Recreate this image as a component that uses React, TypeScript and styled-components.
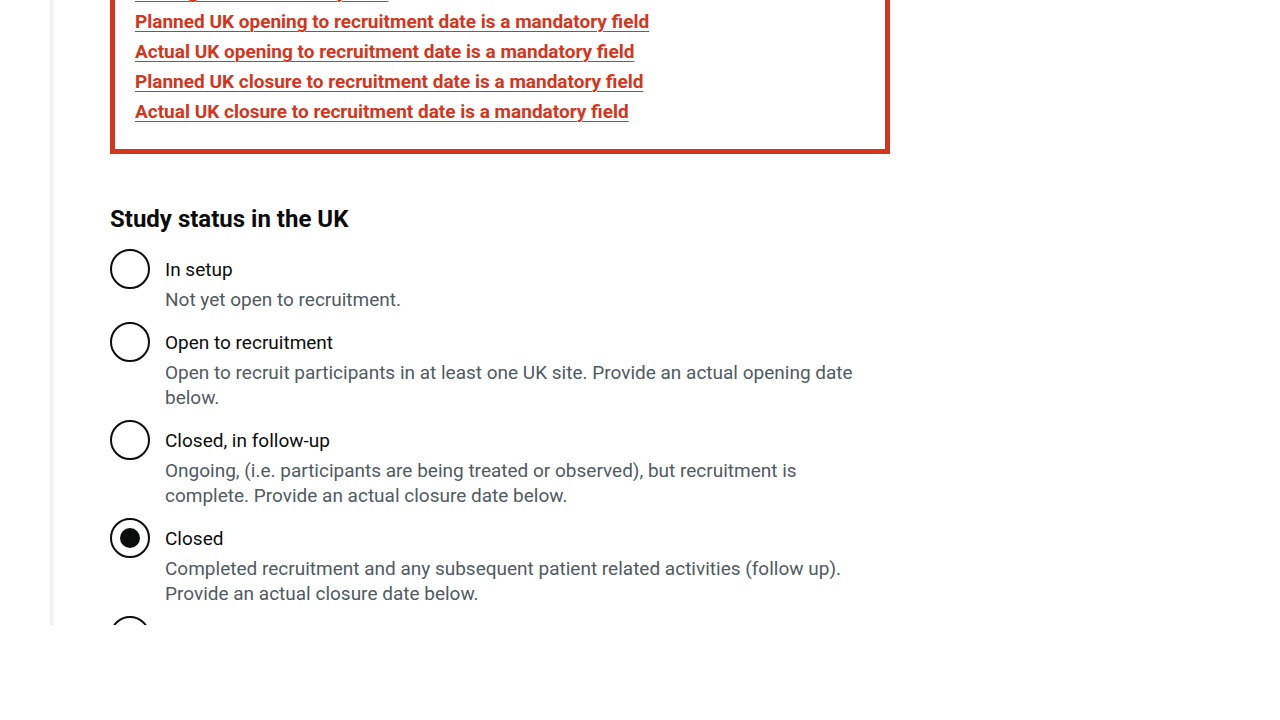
import React, { useState } from 'react';
import styled, { createGlobalStyle } from 'styled-components';

const GlobalStyle = createGlobalStyle`
  *, *::before, *::after { box-sizing: border-box; }
  body {
    margin: 0;
    background: #fff;
    color: #0b0c0c;
    font-family: Roboto, Arial, sans-serif;
    font-size: 19px;
    line-height: 25px;
    text-rendering: optimizeLegibility;
  }
`;

const Page = styled.div`
  display: flex;
  flex-direction: column;
  height: 100vh;
  padding: 0 0 95px 50px;
  overflow: hidden;
`;

const Panel = styled.main`
  flex: 1;
  min-height: 0;
  overflow: hidden;
  padding: 0 60px;
  background: linear-gradient(to right, #e8e8e8, #fff 5px);
`;

const Column = styled.div`
  max-width: 780px;
  margin-top: -46px;
`;

const ErrorSummary = styled.section`
  border: 5px solid #d4351c;
  padding: 20px;
  margin-bottom: 50px;
`;

const ErrorList = styled.ul`
  list-style: none;
  margin: 0;
  padding: 0;
`;

const ErrorItem = styled.li`
  margin-bottom: 5px;
`;

const ErrorLink = styled.a`
  color: #d4351c;
  font-weight: 700;
  text-decoration: underline;
  text-decoration-thickness: 1px;
  text-underline-offset: 3px;
`;

const Fieldset = styled.fieldset`
  border: 0;
  margin: 0;
  padding: 0;
  min-width: 0;
`;

const Legend = styled.legend`
  padding: 0;
  margin-bottom: 15px;
  font-size: 24px;
  line-height: 30px;
  font-weight: 700;
`;

const Option = styled.div`
  display: grid;
  grid-template-columns: 40px 1fr;
  margin-bottom: 10px;
`;

const Radio = styled.input`
  appearance: none;
  display: grid;
  place-items: center;
  width: 40px;
  height: 40px;
  margin: 0;
  border: 2px solid #0b0c0c;
  border-radius: 50%;
  cursor: pointer;

  &:checked::before {
    content: '';
    width: 20px;
    height: 20px;
    border-radius: 50%;
    background: #0b0c0c;
  }
`;

const OptionText = styled.div`
  padding: 8px 15px 0;
`;

const Label = styled.label`
  display: block;
  margin-bottom: 5px;
  cursor: pointer;
`;

const Hint = styled.div`
  color: #505a5f;
`;

const errors = [
  'UK target is a mandatory field',
  'Planned UK opening to recruitment date is a mandatory field',
  'Actual UK opening to recruitment date is a mandatory field',
  'Planned UK closure to recruitment date is a mandatory field',
  'Actual UK closure to recruitment date is a mandatory field',
];

const statuses = [
  { id: 'setup', label: 'In setup', hint: 'Not yet open to recruitment.' },
  {
    id: 'open',
    label: 'Open to recruitment',
    hint: 'Open to recruit participants in at least one UK site. Provide an actual opening date below.',
  },
  {
    id: 'follow-up',
    label: 'Closed, in follow-up',
    hint: 'Ongoing, (i.e. participants are being treated or observed), but recruitment is complete. Provide an actual closure date below.',
  },
  {
    id: 'closed',
    label: 'Closed',
    hint: 'Completed recruitment and any subsequent patient related activities (follow up). Provide an actual closure date below.',
  },
  { id: 'suspended', label: '', hint: '' },
];

export default function App() {
  const [status, setStatus] = useState('closed');

  return (
    <>
      <GlobalStyle />
      <Page>
        <Panel>
          <Column>
            <ErrorSummary aria-label="Errors">
              <ErrorList>
                {errors.map((error) => (
                  <ErrorItem key={error}>
                    <ErrorLink href="#status">{error}</ErrorLink>
                  </ErrorItem>
                ))}
              </ErrorList>
            </ErrorSummary>
            <Fieldset id="status">
              <Legend>Study status in the UK</Legend>
              {statuses.map(({ id, label, hint }) => (
                <Option key={id}>
                  <Radio
                    type="radio"
                    name="status"
                    id={id}
                    value={id}
                    checked={status === id}
                    onChange={() => setStatus(id)}
                    aria-label={label ? undefined : 'Suspended'}
                    aria-describedby={hint ? `${id}-hint` : undefined}
                  />
                  {label && (
                    <OptionText>
                      <Label htmlFor={id}>{label}</Label>
                      <Hint id={`${id}-hint`}>{hint}</Hint>
                    </OptionText>
                  )}
                </Option>
              ))}
            </Fieldset>
          </Column>
        </Panel>
      </Page>
    </>
  );
}
